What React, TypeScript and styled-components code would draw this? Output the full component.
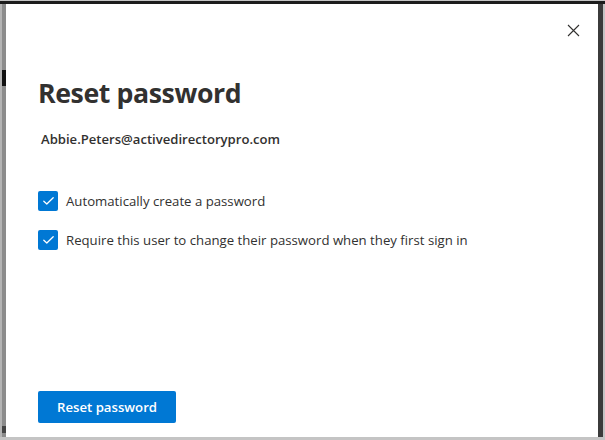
import React from "react";
import styled, { createGlobalStyle } from "styled-components";

const Global = createGlobalStyle`
  html, body { margin: 0; padding: 0; }
  body {
    background: #bfbfbf;
    font-family: "Open Sans", "Noto Sans", "Liberation Sans", sans-serif;
    color: #323130;
  }
  * { box-sizing: border-box; }
`;

const Screen = styled.div`
  width: 605px;
  height: 440px;
  display: flex;
  flex-direction: column;
  background: #c4c4c4;
  padding-top: 1px;
  padding-bottom: 3px;
  overflow: hidden;
`;

const TopEdge = styled.div`
  height: 3px;
  background: #1c1c1c;
  flex: none;
`;

const Body = styled.div`
  flex: 1;
  display: flex;
  min-height: 0;
`;

const BackStrip = styled.div`
  width: 6px;
  flex: none;
  display: flex;
  flex-direction: column;
  border-left: 2px solid #b4b4b4;
  background: #8c8c8c;
`;

const Mark = styled.div<{ $h: number; $top: number; $c: string }>`
  margin-top: ${(p) => p.$top}px;
  height: ${(p) => p.$h}px;
  background: ${(p) => p.$c};
  flex: none;
`;

const Dialog = styled.div`
  flex: 1;
  background: #ffffff;
  display: flex;
  flex-direction: column;
  padding: 0 0 14px 32px;
`;

const Shadow = styled.div`
  width: 5px;
  flex: none;
  background: #3b3b3b;
`;

const Edge = styled.div`
  width: 2px;
  flex: none;
  background: #c4c4c4;
`;

const Header = styled.div`
  display: flex;
  justify-content: flex-end;
  padding: 12px 11px 0 0;
`;

const CloseButton = styled.button`
  width: 28px;
  height: 28px;
  border: none;
  background: transparent;
  padding: 0;
  display: flex;
  align-items: center;
  justify-content: center;
  cursor: pointer;
  color: #323130;
`;

const Title = styled.h1`
  margin: 31px 0 0 0;
  font-family: "Open Sans", "Noto Sans", sans-serif;
  font-weight: 700;
  font-size: 26.7px;
  line-height: 36px;
  letter-spacing: -0.4px;
  color: #323130;
`;

const Email = styled.div`
  margin: 18px 0 0 3px;
  font-size: 13.1px;
  font-weight: 600;
  line-height: 20px;
  color: #323130;
`;

const Options = styled.div`
  display: flex;
  flex-direction: column;
  gap: 19px;
  margin-top: 42px;
`;

const OptionRow = styled.label`
  display: flex;
  align-items: center;
  gap: 8px;
  font-size: 13.2px;
  line-height: 20px;
  color: #323130;
`;

const Box = styled.span`
  width: 20px;
  height: 20px;
  border-radius: 2px;
  background: #0078d4;
  display: flex;
  align-items: center;
  justify-content: center;
  flex: none;
`;

const Footer = styled.div`
  margin-top: auto;
  display: flex;
`;

const PrimaryButton = styled.button`
  height: 32px;
  width: 138px;
  border: none;
  border-radius: 2px;
  background: #0078d4;
  color: #ffffff;
  font-family: "Open Sans", "Noto Sans", sans-serif;
  font-weight: 600;
  font-size: 13.2px;
  padding: 0;
  cursor: pointer;
`;

const Check = () => (
  <svg width="13" height="10" viewBox="0 0 13 10" fill="none">
    <path d="M1.8 5.2 L4.8 8 L11.2 1.8" stroke="#ffffff" strokeWidth="1.3" strokeLinecap="round" strokeLinejoin="round" />
  </svg>
);

const CloseIcon = () => (
  <svg width="13" height="13" viewBox="0 0 13 13" fill="none">
    <path d="M1 1 L12 12 M12 1 L1 12" stroke="#323130" strokeWidth="1.1" />
  </svg>
);

export default function App() {
  return (
    <>
      <Global />
      <Screen>
        <TopEdge />
        <Body>
          <BackStrip>
            <Mark $top={66} $h={16} $c="#111111" />
            <Mark $top={340} $h={7} $c="#444444" />
          </BackStrip>
          <Dialog>
            <Header>
              <CloseButton aria-label="Close">
                <CloseIcon />
              </CloseButton>
            </Header>
            <Title>Reset password</Title>
            <Email>Abbie.Peters@activedirectorypro.com</Email>
            <Options>
              <OptionRow>
                <Box>
                  <Check />
                </Box>
                Automatically create a password
              </OptionRow>
              <OptionRow>
                <Box>
                  <Check />
                </Box>
                Require this user to change their password when they first sign in
              </OptionRow>
            </Options>
            <Footer>
              <PrimaryButton>Reset password</PrimaryButton>
            </Footer>
          </Dialog>
          <Shadow />
          <Edge />
        </Body>
      </Screen>
    </>
  );
}
